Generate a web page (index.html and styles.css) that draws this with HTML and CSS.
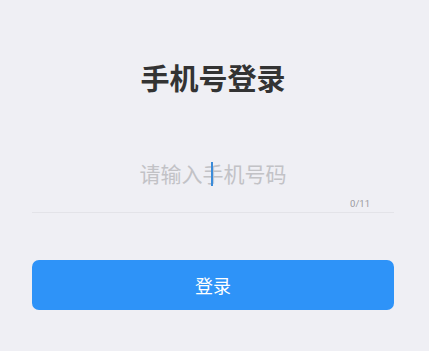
FILE: index.html
```html
<!DOCTYPE html>
<html lang="zh">
<head>
<meta charset="utf-8">
<link rel="stylesheet" href="styles.css">
</head>
<body>
<main class="page">
  <h1 class="title">手机号登录</h1>
  <div class="field">
    <div class="input-row">
      <span class="placeholder">请输入手机号码</span>
      <span class="caret"></span>
    </div>
    <div class="counter">0/11</div>
  </div>
  <button class="login-btn">登录</button>
</main>
</body>
</html>
```

FILE: styles.css
```css
html, body {
  margin: 0;
  padding: 0;
  background: #efeff4;
  font-family: "Noto Sans CJK SC", "Noto Sans", sans-serif;
}
.page {
  width: 362px;
  margin-left: 32px;
  padding-top: 57px;
  display: flex;
  flex-direction: column;
}
.title {
  margin: 0;
  font-size: 29px;
  line-height: 40px;
  font-weight: 700;
  color: #333333;
  text-align: center;
}
.field {
  margin-top: 55px;
  border-bottom: 1px solid #e3e3e8;
}
.input-row {
  position: relative;
  height: 44px;
  padding-bottom: 3px;
  box-sizing: border-box;
  display: flex;
  align-items: center;
  justify-content: center;
}
.placeholder {
  font-size: 21px;
  color: #c2c2c6;
  line-height: 28px;
}
.caret {
  position: absolute;
  left: 179px;
  top: 10px;
  width: 2px;
  height: 24px;
  background: #3a8bd9;
}
.counter {
  text-align: right;
  padding-right: 24px;
  font-size: 9.5px;
  line-height: 16px;
  color: #9a9a9e;
  font-family: "Roboto", "Noto Sans", sans-serif;
}
.login-btn {
  margin-top: 47px;
  height: 50px;
  border: none;
  border-radius: 7px;
  background: #2e93f8;
  color: #ffffff;
  font-size: 18px;
  font-family: "Noto Sans CJK SC", "Noto Sans", sans-serif;
  padding: 0;
}
```
